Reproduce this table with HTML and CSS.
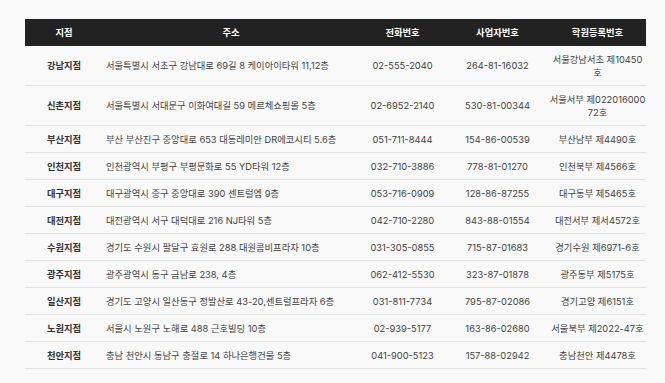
FILE: index.html
```html
<!DOCTYPE html>
<html lang="ko">
<head>
<meta charset="utf-8">
<link rel="stylesheet" href="styles.css">
</head>
<body>
<div class="page">
<table class="branches">
<colgroup>
<col class="c-name"><col class="c-addr"><col class="c-tel"><col class="c-biz"><col class="c-reg">
</colgroup>
<thead>
<tr><th>지점</th><th>주소</th><th>전화번호</th><th>사업자번호</th><th>학원등록번호</th></tr>
</thead>
<tbody>
<tr><td class="name">강남지점</td><td class="addr">서울특별시 서초구 강남대로 69길 8 케이아이타워 11,12층</td><td>02-555-2040</td><td>264-81-16032</td><td class="reg">서울강남서초 제10450호</td></tr>
<tr><td class="name">신촌지점</td><td class="addr">서울특별시 서대문구 이화여대길 59 메르체쇼핑몰 5층</td><td>02-6952-2140</td><td>530-81-00344</td><td class="reg">서울서부 제02201600072호</td></tr>
<tr><td class="name">부산지점</td><td class="addr">부산 부산진구 중앙대로 653 대동레미안 DR에코시티 5.6층</td><td>051-711-8444</td><td>154-86-00539</td><td class="reg">부산남부 제4490호</td></tr>
<tr><td class="name">인천지점</td><td class="addr">인천광역시 부평구 부평문화로 55 YD타워 12층</td><td>032-710-3886</td><td>778-81-01270</td><td class="reg">인천북부 제4566호</td></tr>
<tr><td class="name">대구지점</td><td class="addr">대구광역시 중구 중앙대로 390 센트럴엠 9층</td><td>053-716-0909</td><td>128-86-87255</td><td class="reg">대구동부 제5465호</td></tr>
<tr><td class="name">대전지점</td><td class="addr">대전광역시 서구 대덕대로 216 NJ타워 5층</td><td>042-710-2280</td><td>843-88-01554</td><td class="reg">대전서부 제서4572호</td></tr>
<tr><td class="name">수원지점</td><td class="addr">경기도 수원시 팔달구 효원로 288 대원콤비프라자 10층</td><td>031-305-0855</td><td>715-87-01683</td><td class="reg">경기수원 제6971-6호</td></tr>
<tr><td class="name">광주지점</td><td class="addr">광주광역시 동구 금남로 238, 4층</td><td>062-412-5530</td><td>323-87-01878</td><td class="reg">광주동부 제5175호</td></tr>
<tr><td class="name">일산지점</td><td class="addr">경기도 고양시 일산동구 정발산로 43-20,센트럴프라자 6층</td><td>031-811-7734</td><td>795-87-02086</td><td class="reg">경기고양 제6151호</td></tr>
<tr><td class="name">노원지점</td><td class="addr">서울시 노원구 노해로 488 근호빌딩 10층</td><td>02-939-5177</td><td>163-86-02680</td><td class="reg">서울북부 제2022-47호</td></tr>
<tr><td class="name">천안지점</td><td class="addr">충남 천안시 동남구 충절로 14 하나은행건물 5층</td><td>041-900-5123</td><td>157-88-02942</td><td class="reg">충남천안 제4478호</td></tr>
</tbody>
</table>
</div>
</body>
</html>
```
FILE: styles.css
```css
html, body {
  margin: 0;
  padding: 0;
  background: #f9f9f9;
}
body {
  font-family: Inter, "Noto Sans CJK KR", sans-serif;
  color: #444;
}
.page {
  padding: 19px 19px 0 25px;
}
.branches {
  width: 621px;
  border-collapse: collapse;
  table-layout: fixed;
  font-size: 9.3px;
  line-height: 13px;
}
.c-name { width: 78px; }
.c-addr { width: 256px; }
.c-tel { width: 87px; }
.c-biz { width: 103px; }
.c-reg { width: 97px; }
.branches th {
  background: #222;
  color: #fff;
  font-weight: 700;
  height: 27px;
  padding: 0;
  text-align: center;
}
.branches td {
  padding: 6.5px 0;
  border-bottom: 1px solid #e3e3e3;
  text-align: center;
  vertical-align: middle;
  word-break: break-all;
}
.branches td.name {
  font-weight: 700;
  color: #333;
}
.branches td.addr {
  text-align: left;
  padding-left: 3px;
}
```
